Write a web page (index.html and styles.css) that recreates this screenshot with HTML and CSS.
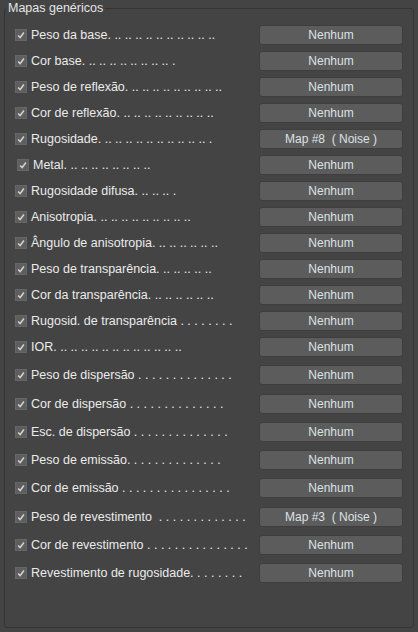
FILE: index.html
```html
<!DOCTYPE html>
<html lang="pt">
<head>
<meta charset="utf-8">
<title>Mapas genéricos</title>
<link rel="stylesheet" href="styles.css">
</head>
<body>
<fieldset class="group">
  <legend class="group-title">Mapas genéricos</legend>
  <div class="rows">
    <div class="row"><label class="opt"><span class="box"><svg viewBox="0 0 12 12"><polyline points="2.5,6.5 5,9 9.5,3"/></svg></span>Peso da base. .. .. .. .. .. .. .. .. .. ..</label><button class="map">Nenhum</button></div>
    <div class="row"><label class="opt"><span class="box"><svg viewBox="0 0 12 12"><polyline points="2.5,6.5 5,9 9.5,3"/></svg></span>Cor base. .. .. .. .. .. .. .. .. .</label><button class="map">Nenhum</button></div>
    <div class="row"><label class="opt"><span class="box"><svg viewBox="0 0 12 12"><polyline points="2.5,6.5 5,9 9.5,3"/></svg></span>Peso de reflexão. .. .. .. .. .. .. .. .. ..</label><button class="map">Nenhum</button></div>
    <div class="row"><label class="opt"><span class="box"><svg viewBox="0 0 12 12"><polyline points="2.5,6.5 5,9 9.5,3"/></svg></span>Cor de reflexão. .. .. .. .. .. .. .. .. ..</label><button class="map">Nenhum</button></div>
    <div class="row"><label class="opt"><span class="box"><svg viewBox="0 0 12 12"><polyline points="2.5,6.5 5,9 9.5,3"/></svg></span>Rugosidade. .. .. .. .. .. .. .. .. .. .. .</label><button class="map">Map #8 &nbsp;( Noise )</button></div>
    <div class="row"><label class="opt shift"><span class="box"><svg viewBox="0 0 12 12"><polyline points="2.5,6.5 5,9 9.5,3"/></svg></span>Metal. .. .. .. .. .. .. .. ..</label><button class="map">Nenhum</button></div>
    <div class="row"><label class="opt"><span class="box"><svg viewBox="0 0 12 12"><polyline points="2.5,6.5 5,9 9.5,3"/></svg></span>Rugosidade difusa. .. .. .. .</label><button class="map">Nenhum</button></div>
    <div class="row"><label class="opt"><span class="box"><svg viewBox="0 0 12 12"><polyline points="2.5,6.5 5,9 9.5,3"/></svg></span>Anisotropia. .. .. .. .. .. .. .. .. ..</label><button class="map">Nenhum</button></div>
    <div class="row"><label class="opt"><span class="box"><svg viewBox="0 0 12 12"><polyline points="2.5,6.5 5,9 9.5,3"/></svg></span>Ângulo de anisotropia. .. .. .. .. .. ..</label><button class="map">Nenhum</button></div>
    <div class="row"><label class="opt"><span class="box"><svg viewBox="0 0 12 12"><polyline points="2.5,6.5 5,9 9.5,3"/></svg></span>Peso de transparência. .. .. .. .. ..</label><button class="map">Nenhum</button></div>
    <div class="row"><label class="opt"><span class="box"><svg viewBox="0 0 12 12"><polyline points="2.5,6.5 5,9 9.5,3"/></svg></span>Cor da transparência. .. .. .. .. .. ..</label><button class="map">Nenhum</button></div>
    <div class="row"><label class="opt"><span class="box"><svg viewBox="0 0 12 12"><polyline points="2.5,6.5 5,9 9.5,3"/></svg></span>Rugosid. de transparência . . . . . . . .</label><button class="map">Nenhum</button></div>
    <div class="row"><label class="opt"><span class="box"><svg viewBox="0 0 12 12"><polyline points="2.5,6.5 5,9 9.5,3"/></svg></span>IOR. .. .. .. .. .. .. .. .. .. .. .. ..</label><button class="map">Nenhum</button></div>
    <div class="row wide"><label class="opt"><span class="box"><svg viewBox="0 0 12 12"><polyline points="2.5,6.5 5,9 9.5,3"/></svg></span>Peso de dispersão . . . . . . . . . . . . . .</label><button class="map">Nenhum</button></div>
    <div class="row wide"><label class="opt"><span class="box"><svg viewBox="0 0 12 12"><polyline points="2.5,6.5 5,9 9.5,3"/></svg></span>Cor de dispersão . . . . . . . . . . . . . .</label><button class="map">Nenhum</button></div>
    <div class="row wide"><label class="opt"><span class="box"><svg viewBox="0 0 12 12"><polyline points="2.5,6.5 5,9 9.5,3"/></svg></span>Esc. de dispersão . . . . . . . . . . . . . .</label><button class="map">Nenhum</button></div>
    <div class="row wide"><label class="opt"><span class="box"><svg viewBox="0 0 12 12"><polyline points="2.5,6.5 5,9 9.5,3"/></svg></span>Peso de emissão. . . . . . . . . . . . . .</label><button class="map">Nenhum</button></div>
    <div class="row wide"><label class="opt"><span class="box"><svg viewBox="0 0 12 12"><polyline points="2.5,6.5 5,9 9.5,3"/></svg></span>Cor de emissão . . . . . . . . . . . . . . . .</label><button class="map">Nenhum</button></div>
    <div class="row wide"><label class="opt"><span class="box"><svg viewBox="0 0 12 12"><polyline points="2.5,6.5 5,9 9.5,3"/></svg></span>Peso de revestimento &nbsp;. . . . . . . . . . . . .</label><button class="map">Map #3 &nbsp;( Noise )</button></div>
    <div class="row wide"><label class="opt"><span class="box"><svg viewBox="0 0 12 12"><polyline points="2.5,6.5 5,9 9.5,3"/></svg></span>Cor de revestimento . . . . . . . . . . . . . . .</label><button class="map">Nenhum</button></div>
    <div class="row wide"><label class="opt"><span class="box"><svg viewBox="0 0 12 12"><polyline points="2.5,6.5 5,9 9.5,3"/></svg></span>Revestimento de rugosidade. . . . . . . .</label><button class="map">Nenhum</button></div>
  </div>
</fieldset>
</body>
</html>
```
FILE: styles.css
```css
html, body {
  margin: 0;
  padding: 0;
  background: #444444;
}

body {
  font-family: "Liberation Sans", Arial, sans-serif;
  font-size: 12px;
  color: #e6e6e6;
  height: 632px;
  overflow: hidden;
}

.group {
  box-sizing: border-box;
  height: 628px;
  margin: 0 4px;
  padding: 9px 10px 0 10px;
  border: 1px solid #343434;
  border-radius: 3px;
  min-width: 0;
}

.group-title {
  margin-left: -9px;
  padding: 0 2px;
  font-size: 12.5px;
  line-height: 16px;
  color: #e4e4e4;
}

.rows {
  display: flex;
  flex-direction: column;
  gap: 6px;
}

.row {
  display: flex;
  align-items: center;
  height: 20px;
}

.row.wide {
  margin-top: 2.25px;
}

.opt {
  flex: 1;
  display: flex;
  align-items: center;
  gap: 4px;
  white-space: nowrap;
  color: #ebebeb;
  font-size: 12.5px;
  line-height: 14px;
}

.opt.shift {
  padding-left: 2px;
}

.box {
  width: 12px;
  height: 12px;
  flex: none;
  box-sizing: border-box;
  background: #5e5e5e;
  border: 1px solid #666666;
  display: flex;
}

.box svg {
  width: 10px;
  height: 10px;
  fill: none;
  stroke: #d2d2d2;
  stroke-width: 1.8;
}

.map {
  flex: none;
  width: 144px;
  height: 20px;
  box-sizing: border-box;
  padding: 0;
  background: #5c5c5c;
  border: 1px solid #3e3e3e;
  border-radius: 3px;
  font-family: "Liberation Sans", Arial, sans-serif;
  font-size: 12px;
  color: #dde2e4;
  line-height: 18px;
  text-align: center;
}
```
